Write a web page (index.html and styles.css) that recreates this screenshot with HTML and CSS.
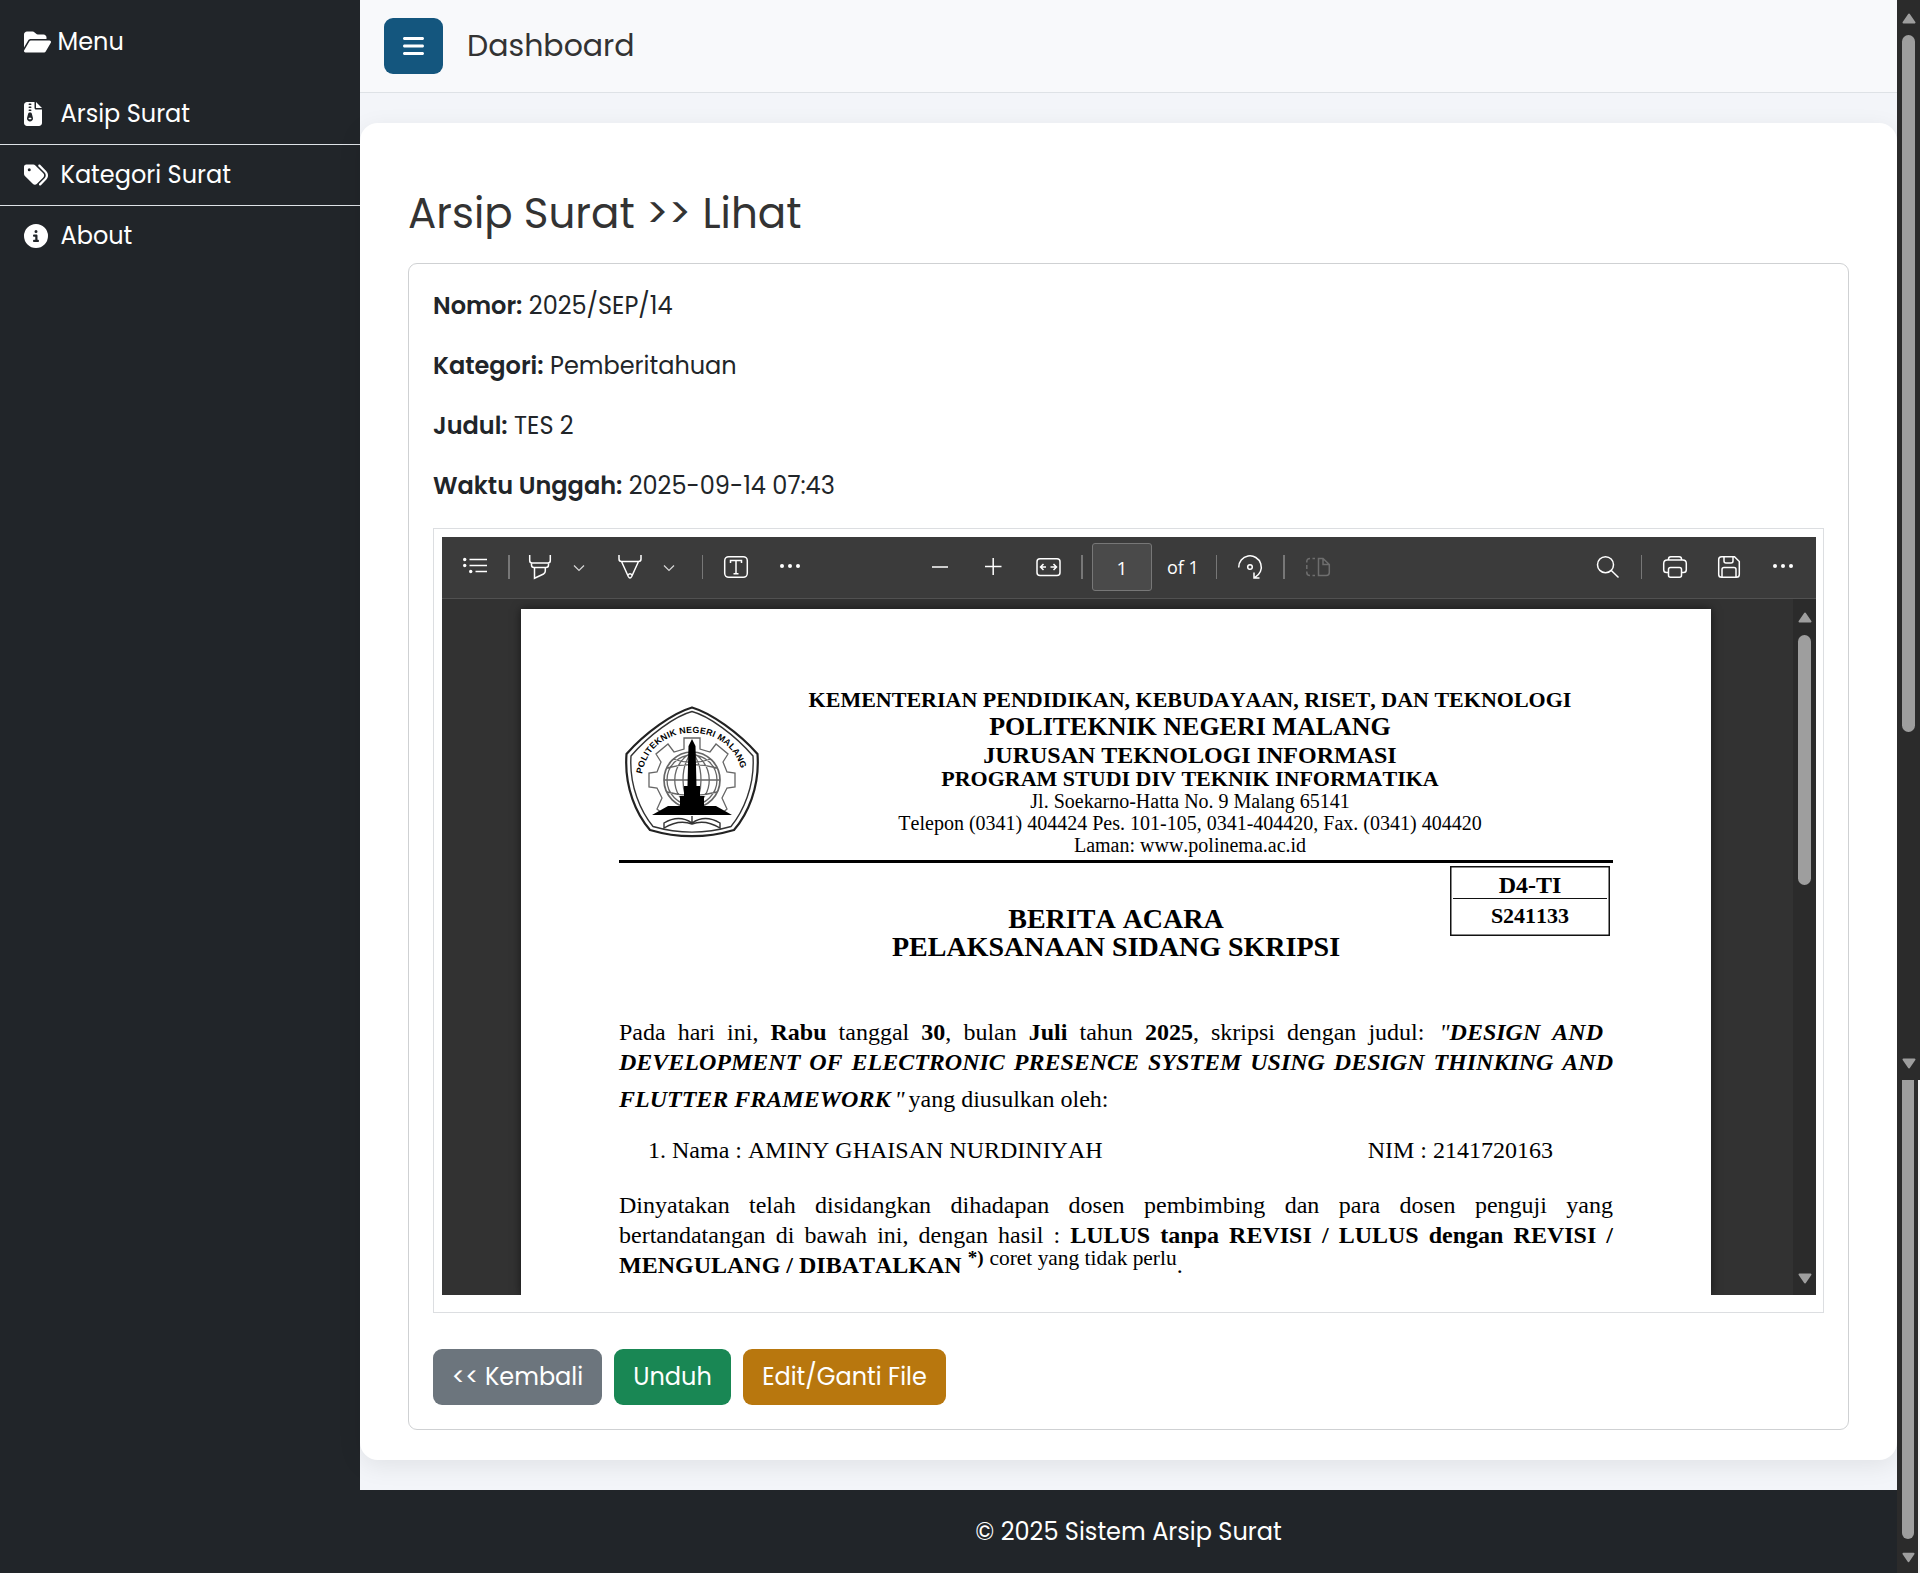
FILE: index.html
```html
<!DOCTYPE html>
<html lang="id">
<head>
<meta charset="utf-8">
<title>Arsip Surat - Lihat</title>
<link rel="stylesheet" href="styles.css">
</head>
<body>
<div class="app">
  <aside class="sidebar">
    <div class="sidebar-heading">
      <svg width="27" height="24" viewBox="0 0 576 512"><path d="M88.7 223.8L0 375.8 0 96C0 60.7 28.7 32 64 32l117.5 0c17 0 33.3 6.7 45.3 18.7l26.5 26.5c12 12 28.3 18.7 45.3 18.7L416 96c35.3 0 64 28.7 64 64l0 32-336 0c-22.8 0-43.8 12.1-55.3 31.8zm27.6 16.1C122.1 230 132.6 224 144 224l400 0c11.5 0 22 6.1 27.7 16.1s5.7 22.2-.1 32.1l-112 192C453.9 474 443.4 480 432 480L32 480c-11.5 0-22-6.1-27.7-16.1s-5.7-22.2 .1-32.1l112-192z"/></svg>
      <span>Menu</span>
    </div>
    <nav class="side-nav">
      <a class="side-link"><span class="side-icon"><svg width="18" height="24" viewBox="0 0 384 512"><path fill-rule="evenodd" d="M64 0C28.7 0 0 28.7 0 64L0 448c0 35.300 28.700 64 64 64l256 0c35.300 0 64-28.700 64-64l0-288-128 0c-17.700 0-32-14.300-32-32L224 0 64 0zM256 0l0 128 128 0L256 0zM112 32l32 0a16 16 0 0 1 0 32l-32 0a16 16 0 0 1 0-32zM112 96l32 0a16 16 0 0 1 0 32l-32 0a16 16 0 0 1 0-32zM112 160l32 0a16 16 0 0 1 0 32l-32 0a16 16 0 0 1 0-32zM89.700 247.800c3.700-14 16.400-23.800 30.900-23.800l14.800 0c14.500 0 27.200 9.700 30.900 23.800l23.500 88.200c1.400 5.400 2.100 10.900 2.100 16.400c0 35.200-28.800 63.700-64 63.700s-64-28.500-64-63.700c0-5.500 .7-11.100 2.100-16.400l23.500-88.200zM112 336c-8.800 0-16 7.200-16 16s7.200 16 16 16l32 0c8.800 0 16-7.200 16-16s-7.200-16-16-16l-32 0z"/></svg></span><span>Arsip Surat</span></a>
      <a class="side-link"><span class="side-icon"><svg width="24" height="24" viewBox="0 0 512 512"><path fill-rule="evenodd" d="M345 39.100L472.800 168.400c52.400 53 52.400 138.200 0 191.200L360.800 472.900c-9.300 9.400-24.500 9.500-33.900 .2s-9.500-24.500-.2-33.900L438.600 325.900c33.900-34.300 33.900-89.400 0-123.700L310.900 72.900c-9.300-9.400-9.200-24.600 .2-33.900s24.600-9.200 33.900 .2zM0 229.500L0 80C0 53.500 21.500 32 48 32l149.500 0c17 0 33.300 6.700 45.300 18.700l168 168c25 25 25 65.500 0 90.500L277.300 442.700c-25 25-65.500 25-90.500 0l-168-168C6.700 262.700 0 246.500 0 229.500zM144 144a32 32 0 1 0 -64 0 32 32 0 1 0 64 0z"/></svg></span><span>Kategori Surat</span></a>
      <a class="side-link"><span class="side-icon"><svg width="24" height="24" viewBox="0 0 512 512"><path fill-rule="evenodd" d="M256 512A256 256 0 1 0 256 0a256 256 0 1 0 0 512zM216 336l24 0 0-64-24 0c-13.300 0-24-10.700-24-24s10.700-24 24-24l48 0c13.300 0 24 10.700 24 24l0 88 8 0c13.300 0 24 10.700 24 24s-10.700 24-24 24l-80 0c-13.300 0-24-10.700-24-24s10.700-24 24-24zm40-208a32 32 0 1 1 0 64 32 32 0 1 1 0-64z"/></svg></span><span>About</span></a>
    </nav>
  </aside>

  <main class="main">
    <header class="navbar">
      <button class="toggle"><svg width="21" height="24" viewBox="0 0 448 512"><path d="M0 96C0 78.300 14.300 64 32 64l384 0c17.700 0 32 14.300 32 32s-14.300 32-32 32L32 128C14.300 128 0 113.700 0 96zM0 256c0-17.700 14.300-32 32-32l384 0c17.700 0 32 14.300 32 32s-14.300 32-32 32L32 288c-17.700 0-32-14.300-32-32zM448 416c0 17.700-14.300 32-32 32L32 448c-17.700 0-32-14.300-32-32s14.300-32 32-32l384 0c17.700 0 32 14.300 32 32z"/></svg></button>
      <span class="brand">Dashboard</span>
    </header>

    <section class="panel">
      <h2 class="title">Arsip Surat &gt;&gt; Lihat</h2>
      <div class="detail">
        <p class="field"><strong>Nomor:</strong> 2025/SEP/14</p>
        <p class="field"><strong>Kategori:</strong> Pemberitahuan</p>
        <p class="field"><strong>Judul:</strong> TES 2</p>
        <p class="field"><strong>Waktu Unggah:</strong> 2025-09-14 07:43</p>

        <div class="frame">
          <div class="viewer">
            <div class="toolbar">
              <svg class="tool g21" viewBox="0 0 24 24"><path d="M6.500 4.500H24M6.500 10.500H24M12.500 16.500H24"/><g class="solid"><circle cx="1.700" cy="4.500" r="1.700"/><circle cx="1.700" cy="10.500" r="1.700"/><circle cx="7.700" cy="16.500" r="1.700"/></g></svg>
              <i class="sep wide g21"></i>
              <svg class="tool g18" viewBox="0 0 24 24"><path d="M1.700 0V5.500Q1.700 8 4 8H20Q22.300 8 22.300 5.500V0M3.500 8V10Q3.500 12.500 6 12.500H18Q20.500 12.500 20.500 10V8M6.500 12.500V23.200L15.500 19Q17.300 18 17.300 16V12.500"/></svg>
              <svg class="chev g21" viewBox="0 0 12 24"><path d="M1 10.500l5 5 5-5"/></svg>
              <svg class="tool g33" viewBox="0 0 24 24"><path d="M1 0V4Q1 6.500 3.500 6.500H20.500Q23 6.500 23 4V0M3.500 6.500L10.300 21.500Q12 24.500 13.700 21.500L20.500 6.500M9.800 20.500Q12 17 14.200 20.500"/></svg>
              <svg class="chev g21" viewBox="0 0 12 24"><path d="M1 10.500l5 5 5-5"/></svg>
              <i class="sep g27"></i>
              <svg class="tool g21" viewBox="0 0 24 24"><rect x=".7" y="1.700" width="22.600" height="20.600" rx="4"/><path d="M6.500 8V5.500H17.500V8M12 5.500V18.500M9.500 18.700H14.500"/></svg>
              <svg class="tool g30" viewBox="0 0 24 24"><g class="solid"><circle cx="4" cy="11" r="2"/><circle cx="12" cy="11" r="2"/><circle cx="20" cy="11" r="2"/></g></svg>

              <svg class="tool g126" viewBox="0 0 24 24"><path d="M4 12H20"/></svg>
              <svg class="tool g29" viewBox="0 0 24 24"><path d="M4 11.500H20.500M12.200 3V20"/></svg>
              <svg class="tool g31" viewBox="0 0 24 24"><rect x="1" y="3.700" width="23" height="16.800" rx="3"/><path d="M10 12H4.500M7.500 9L4.500 12L7.500 15M14.500 12H20.500M17.500 9L20.500 12L17.500 15"/></svg>
              <i class="sep wide g21"></i>
              <span class="page-no g9">1</span>
              <span class="page-of g15">of 1</span>
              <i class="sep g19"></i>
              <svg class="tool g21" viewBox="0 0 24 24"><path d="M.7 12.500A11.300 11.300 0 1 1 17 22.300M16 17.500V23H21.500"/><circle cx="12" cy="12" r="2.300"/></svg>
              <i class="sep wide g21"></i>
              <svg class="tool dim g21" viewBox="0 0 24 24"><path d="M12.500 3.500H17L23.300 9.500V17.500Q23.300 20.500 20.300 20.500H12.500ZM17 3.500V9.500H23M9 3.500H6.500M4 3.500Q.8 3.500 .8 6.500V7.500M.8 10V14M.8 16.500V17.500Q.8 20.500 4 20.500M6.500 20.500H9"/></svg>

              <svg class="tool g266" viewBox="0 0 24 24"><circle cx="9.500" cy="9.700" r="8"/><path d="M15.300 15.500L22.500 22.500"/></svg>
              <i class="sep g21"></i>
              <svg class="tool g21" viewBox="0 0 24 24"><path d="M5.500 17.500H3.500Q.7 17.500 .7 14.700V8.500Q.7 5 4.200 5H19.800Q23.300 5 23.300 8.500V14.700Q23.300 17.500 20.500 17.500H18.500M5.500 5V4Q5.500 1.700 7.800 1.700H16.200Q18.500 1.700 18.500 4V5"/><rect x="5.500" y="12.500" width="13" height="9.800" rx="2"/></svg>
              <svg class="tool g30" viewBox="0 0 24 24"><path d="M1.700 4.500Q1.700 1.700 4.500 1.700H17.500L22.300 6.500V19.500Q22.300 22.300 19.500 22.300H4.500Q1.700 22.300 1.700 19.500ZM7 1.700V6Q7 8 9 8H14Q16 8 16 6V1.700M5 22.300V14.500Q5 12.500 7 12.500H17Q19 12.500 19 14.500V22.300"/></svg>
              <svg class="tool g30" viewBox="0 0 24 24"><g class="solid"><circle cx="4" cy="11" r="2"/><circle cx="12" cy="11" r="2"/><circle cx="20" cy="11" r="2"/></g></svg>
            </div>

            <div class="canvas">
              <div class="canvas-body">
                <article class="sheet">
                  <div class="letterhead">
                    <svg class="crest" viewBox="0 0 134 132">
                      <path class="o2" d="M67 1.500C48 7 20 27 1.500 48C-1 82 12 109 25 124C52 132 82 132 109 124C122 109 135 82 132.500 48C114 27 86 7 67 1.500Z"/>
                      <path class="o1" d="M67 5.500C50 10 24 29 6 50C4 80 16 106 28 120.500C54 128 80 128 106 120.500C118 106 130 80 128 50C110 29 84 10 67 5.500Z"/>
                      <path class="gear" d="M59 43V32H75V43L85 46L91 38L103 48L98 56L102 66L110 67V81L102 82L97 92L102 103L96 108H38L32 103L37 92L32 82L24 81V67L32 66L36 56L31 48L43 38L49 46Z"/>
                      <circle class="globe-bg" cx="67" cy="74" r="28"/>
                      <path class="gear" d="M67 46V102M39 74H95M42 62Q67 55 92 62M42 86Q67 93 92 86M48 53Q67 60 86 53M67 46C44 60 44 88 67 102M67 46C90 60 90 88 67 102M67 46C55 60 55 88 67 102M67 46C79 60 79 88 67 102M67 49A25 25 0 0 0 67 99A25 25 0 0 0 67 49"/>
                      <path d="M63.500 40L67 33L70.500 40L71.500 80H75V90H79V100H91L107 109H27L43 100H55V90H59V80H62.500Z"/>
                      <path class="o1" d="M39 122V117Q54 108 67 117Q80 108 95 117V122Q80 113 67 118Q54 113 39 122ZM67 110V118"/>
                      <path id="arc" class="none" d="M17 68C26 13 108 13 117 68"/>
                      <text class="crest-text"><textPath href="#arc" textLength="136" lengthAdjust="spacing">POLITEKNIK NEGERI MALANG</textPath></text>
                    </svg>
                    <div class="head-lines">
                      <div class="hl h22">KEMENTERIAN PENDIDIKAN, KEBUDAYAAN, RISET, DAN TEKNOLOGI</div>
                      <div class="hl h26">POLITEKNIK NEGERI MALANG</div>
                      <div class="hl h24">JURUSAN TEKNOLOGI INFORMASI</div>
                      <div class="hl h22 program">PROGRAM STUDI DIV TEKNIK INFORMATIKA</div>
                      <div class="hl h20">Jl. Soekarno-Hatta No. 9 Malang 65141</div>
                      <div class="hl h20">Telepon (0341) 404424 Pes. 101-105, 0341-404420, Fax. (0341) 404420</div>
                      <div class="hl h20">Laman: www.polinema.ac.id</div>
                    </div>
                  </div>
                  <div class="rule"></div>
                  <div class="heading-row">
                    <div class="doc-title">BERITA ACARA<br>PELAKSANAAN SIDANG SKRIPSI</div>
                    <div class="code-box"><div class="code-top">D4-TI</div><div class="code-num">S241133</div></div>
                  </div>
                  <div class="ln first">Pada hari ini, <b>Rabu</b> tanggal <b>30</b>, bulan <b>Juli</b> tahun <b>2025</b>, skripsi dengan judul: <span class="open-q">"</span><b><i>DESIGN AND</i></b></div>
                  <div class="ln just"><b><i>DEVELOPMENT OF ELECTRONIC PRESENCE SYSTEM USING DESIGN THINKING AND</i></b></div>
                  <div class="ln third"><b><i>FLUTTER FRAMEWORK</i></b><span class="close-q">"</span>yang diusulkan oleh:</div>
                  <div class="ln person"><span>1. Nama : AMINY GHAISAN NURDINIYAH</span><span>NIM : 2141720163</span></div>
                  <div class="ln just">Dinyatakan telah disidangkan dihadapan dosen pembimbing dan para dosen penguji yang</div>
                  <div class="ln just">bertandatangan di bawah ini, dengan hasil : <b>LULUS tanpa REVISI / LULUS dengan REVISI /</b></div>
                  <div class="ln"><b>MENGULANG / DIBATALKAN</b> <b class="mark">*)</b> <span class="note">coret yang tidak perlu</span>.</div>
                </article>
              </div>
              <div class="scroll inner-scroll">
                <svg class="arrow" viewBox="0 0 14 11"><path d="M7 1.500L12.500 9.500H1.500Z"/></svg>
                <i class="thumb"></i>
                <svg class="arrow last" viewBox="0 0 14 11"><path d="M7 9.500L12.500 1.500H1.500Z"/></svg>
              </div>
            </div>
          </div>
        </div>

        <div class="actions">
          <a class="btn gray">&lt;&lt; Kembali</a>
          <a class="btn green">Unduh</a>
          <a class="btn amber">Edit/Ganti File</a>
        </div>
      </div>
    </section>

    <footer class="footer">© 2025 Sistem Arsip Surat</footer>
  </main>

  <div class="rail">
    <div class="scroll outer-top">
      <svg class="arrow" viewBox="0 0 14 11"><path d="M7 1.500L12.500 9.500H1.500Z"/></svg>
      <i class="thumb"></i>
      <svg class="arrow last" viewBox="0 0 14 11"><path d="M7 9.500L12.500 1.500H1.500Z"/></svg>
    </div>
    <div class="scroll outer-bottom">
      <i class="thumb"></i>
      <svg class="arrow last" viewBox="0 0 14 11"><path d="M7 9.500L12.500 1.500H1.500Z"/></svg>
    </div>
  </div>
</div>
</body>
</html>
```
FILE: styles.css
```css
* { box-sizing: border-box; }
body {
  margin: 0;
  font-family: "Poppins", "Inter", sans-serif;
  font-size: 24px;
  line-height: 36px;
  color: #212529;
  background: #f3f5f9;
}
svg { display: block; flex: none; }
.app { display: grid; grid-template-columns: 360px 1537px 23px; height: 1573px; overflow: hidden; }

/* sidebar */
.sidebar { background: #212529; color: #fff; }
.sidebar svg { fill: #fff; }
.sidebar-heading { display: flex; align-items: center; gap: 6.500px; height: 84px; padding: 0 24px; }
.side-link { display: flex; align-items: center; height: 61px; padding: 0 24px; border-bottom: 1px solid #dee2e6; white-space: nowrap; }
.side-link:last-child { height: 60px; border-bottom: 0; }
.side-icon { width: 24px; margin-right: 12.500px; }

/* main column */
.main { display: flex; flex-direction: column; }
.navbar { display: flex; align-items: center; height: 93px; padding: 0 24px; background: #f8f9fb; border-bottom: 1px solid #dee2e6; }
.toggle { display: flex; align-items: center; justify-content: center; width: 59px; height: 56px; padding: 0; border: 0; border-radius: 9px; background: #14567e; }
.toggle svg { fill: #fff; }
.brand { margin-left: 24px; font-size: 30px; color: #333; }
.panel { height: 1337px; margin: 30px 0; padding: 66px 48px 30px; border-radius: 18px; background: #fff; box-shadow: 0 6px 24px rgba(0, 0, 0, .08); }
.title { margin: 0 0 25px; font-size: 42px; line-height: 49px; font-weight: 400; color: #333; white-space: nowrap; }
.detail { height: 1167px; padding: 24px; border: 1px solid #cfd1d3; border-radius: 9px; }
.field { margin: 0 0 24px; white-space: nowrap; }
.field strong { font-weight: 600; }
.frame { height: 785px; padding: 8px 7px 8px 8px; border: 1px solid #dcdee1; }
.actions { display: flex; gap: 12px; margin-top: 36px; }
.btn { display: flex; align-items: center; justify-content: center; height: 56px; border-radius: 9px; color: #fff; white-space: nowrap; }
.gray { width: 169px; background: #6c757d; }
.green { width: 117px; background: #198754; }
.amber { width: 203px; background: #b8770e; }
.footer { flex: 1; display: flex; align-items: center; justify-content: center; background: #212529; color: #fff; }

/* document viewer */
.viewer { height: 758px; display: flex; flex-direction: column; background: #323232; }
.toolbar { display: flex; align-items: center; height: 62px; padding-bottom: 1px; background: #3b3b3b; border-bottom: 1px solid #515151; }
.tool { width: 24px; height: 24px; fill: none; stroke: #fff; stroke-width: 1.500; overflow: visible; }
.chev { width: 12px; height: 24px; fill: none; stroke: #d8d8d8; stroke-width: 1.200; }
.dim { stroke: #6e6e6e; }
.solid { fill: #fff; stroke: none; }
.sep { flex: none; width: 1px; height: 24px; background: #777; }
.wide { width: 2px; }
.page-no { width: 60px; height: 48px; border: 1px solid #777; border-radius: 3px; background: #4a4a4a; color: #fff; text-align: center; font: 19px/48px "Open Sans", sans-serif; }
.page-of { width: 30px; color: #fff; font: 18px/48px "Open Sans", sans-serif; white-space: nowrap; }
.g9 { margin-left: 9px; }
.g15 { margin-left: 15px; }
.g18 { margin-left: 18px; }
.g19 { margin-left: 19px; }
.g21 { margin-left: 21px; }
.g27 { margin-left: 27px; }
.g29 { margin-left: 29px; }
.g30 { margin-left: 30px; }
.g31 { margin-left: 31px; }
.g33 { margin-left: 33px; }
.g126 { margin-left: 126px; }
.g266 { margin-left: 266px; }
.canvas { flex: 1; display: flex; min-height: 0; }
.canvas-body { width: 1352px; padding: 10px 83px 0 79px; overflow: hidden; }
.sheet { width: 1190px; height: 686px; padding: 0 98px; overflow: hidden; background: #fff; box-shadow: 0 0 9px rgba(0, 0, 0, .55); color: #000; font-family: "Liberation Serif", "Times New Roman", serif; font-size: 24px; line-height: 30px; font-kerning: none; }
.letterhead { display: flex; height: 251px; }
.crest { width: 134px; height: 132px; margin: 97px 8px 0 6px; }
.o2 { fill: none; stroke: #222; stroke-width: 2.200; }
.o1 { fill: none; stroke: #333; stroke-width: 1.400; }
.gear { fill: none; stroke: #666; stroke-width: 1.300; }
.globe-bg { fill: #fff; stroke: #666; stroke-width: 1.700; }
.none { fill: none; }
.crest-text { font: bold 8.800px "Liberation Sans", Arial, sans-serif; }
.head-lines { flex: 1; padding-top: 78px; text-align: center; white-space: nowrap; }
.hl { font-weight: 700; }
.h22 { font-size: 22px; line-height: 26px; }
.h26 { font-size: 26px; line-height: 28px; }
.h24 { font-size: 24px; line-height: 28px; }
.h22.program { line-height: 20px; padding-bottom: 1px; }
.h20 { font-size: 20px; line-height: 22px; font-weight: 400; }
.rule { height: 3px; background: #000; }
.heading-row { display: grid; grid-template-columns: 160px 674px 160px; padding-top: 3px; height: 154px; }
.doc-title { grid-column: 2; padding-top: 39px; text-align: center; font-size: 28px; line-height: 28px; font-weight: 700; }
.code-box { width: 160px; height: 70px; margin-left: -3px; padding: 1px 3px; box-shadow: inset 0 0 0 1.500px #111; text-align: center; font-weight: 700; }
.code-top { height: 32px; line-height: 36px; border-bottom: 1.500px solid #111; }
.code-num { font-size: 22px; line-height: 33px; }
.ln { height: 30px; white-space: nowrap; }
.first { width: 984px; text-align: justify; text-align-last: justify; white-space: normal; }
.just { text-align: justify; text-align-last: justify; white-space: normal; }
.third { margin-top: 7px; }
.open-q { margin-left: 3px; font-style: italic; }
.close-q { margin: 0 4px 0 4px; font-style: italic; }
.person { display: flex; margin: 21px 0 25px; padding: 0 60px 0 29px; justify-content: space-between; }
.mark { font-size: 19px; line-height: 0; vertical-align: 9px; }
.note { font-size: 21.400px; line-height: 0; vertical-align: 8px; }

/* scrollbars */
.scroll { display: flex; flex-direction: column; width: 23px; background: #2b2b2b; }
.arrow { width: 14px; height: 11px; margin-left: 5px; fill: #9e9e9e; stroke: #9e9e9e; stroke-width: 2; stroke-linejoin: round; }
.thumb { width: 13px; margin-left: 5px; border-radius: 7px; background: #9e9e9e; }
.last { margin-top: auto; }
.inner-scroll { padding: 13px 0 11px; }
.inner-scroll .thumb { height: 250px; margin-top: 12px; }
.rail { display: flex; flex-direction: column; }
.outer-top { height: 1080px; padding: 13px 0 11px; }
.outer-top .thumb { height: 697px; margin-top: 11px; }
.outer-bottom { flex: 1; padding-bottom: 10px; border-right: 2px solid #f3f3f3; }
.outer-bottom .thumb { width: 12px; height: 459px; border-radius: 0 0 6px 6px; }
.outer-bottom .arrow { width: 13px; }
```
